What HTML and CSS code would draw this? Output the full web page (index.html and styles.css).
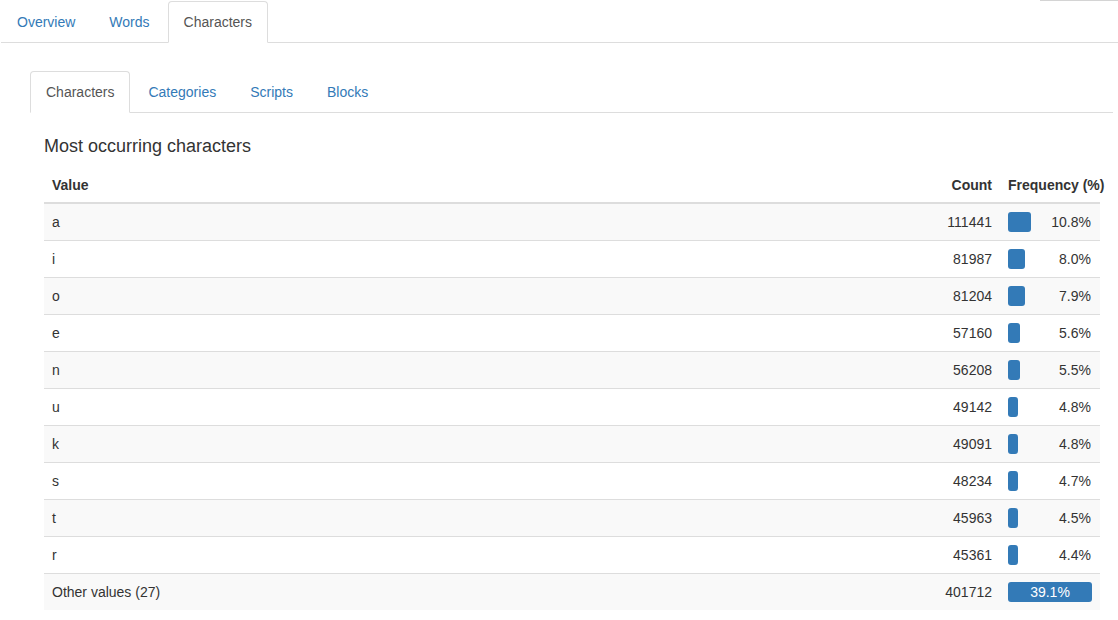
FILE: index.html
```html
<!DOCTYPE html>
<html>
<head>
    <title>Characters</title>
    <link rel="stylesheet" href="styles.css">
</head>
<body>
    <div class="topbar"><span class="topbar-edge"></span></div>
    <ul class="nav-tabs">
        <li><a href="#">Overview</a></li>
        <li><a href="#">Words</a></li>
        <li class="active"><a href="#">Characters</a></li>
    </ul>
    <div class="tab-content">
        <ul class="nav-tabs sub">
            <li class="active"><a href="#">Characters</a></li>
            <li><a href="#">Categories</a></li>
            <li><a href="#">Scripts</a></li>
            <li><a href="#">Blocks</a></li>
        </ul>
        <div class="section">
            <h4>Most occurring characters</h4>
            <table class="freq-table">
                <colgroup>
                    <col>
                    <col class="col-count">
                    <col class="col-freq">
                </colgroup>
                <thead>
                    <tr>
                        <th>Value</th>
                        <th class="num">Count</th>
                        <th>Frequency (%)</th>
                    </tr>
                </thead>
                <tbody>
                    <tr><td>a</td><td class="num">111441</td><td><div class="freq"><div class="bar" style="width:23.2px"></div><span>10.8%</span></div></td></tr>
                    <tr><td>i</td><td class="num">81987</td><td><div class="freq"><div class="bar" style="width:17.2px"></div><span>8.0%</span></div></td></tr>
                    <tr><td>o</td><td class="num">81204</td><td><div class="freq"><div class="bar" style="width:17.0px"></div><span>7.9%</span></div></td></tr>
                    <tr><td>e</td><td class="num">57160</td><td><div class="freq"><div class="bar" style="width:12.0px"></div><span>5.6%</span></div></td></tr>
                    <tr><td>n</td><td class="num">56208</td><td><div class="freq"><div class="bar" style="width:11.8px"></div><span>5.5%</span></div></td></tr>
                    <tr><td>u</td><td class="num">49142</td><td><div class="freq"><div class="bar" style="width:10.3px"></div><span>4.8%</span></div></td></tr>
                    <tr><td>k</td><td class="num">49091</td><td><div class="freq"><div class="bar" style="width:10.3px"></div><span>4.8%</span></div></td></tr>
                    <tr><td>s</td><td class="num">48234</td><td><div class="freq"><div class="bar" style="width:10.1px"></div><span>4.7%</span></div></td></tr>
                    <tr><td>t</td><td class="num">45963</td><td><div class="freq"><div class="bar" style="width:9.7px"></div><span>4.5%</span></div></td></tr>
                    <tr><td>r</td><td class="num">45361</td><td><div class="freq"><div class="bar" style="width:9.5px"></div><span>4.4%</span></div></td></tr>
                    <tr class="other"><td>Other values (27)</td><td class="num">401712</td><td><div class="freq"><div class="bar full">39.1%</div></div></td></tr>
                </tbody>
            </table>
        </div>
    </div>
</body>
</html>
```

FILE: styles.css
```css
* {
    box-sizing: border-box;
}
body {
    margin: 0;
    font-family: "Liberation Sans", Arial, sans-serif;
    font-size: 14px;
    line-height: 20px;
    color: #333;
    background: #fff;
}
a {
    color: #337ab7;
    text-decoration: none;
}

/* thin edge of the panel above */
.topbar {
    height: 1px;
    display: flex;
    justify-content: flex-end;
}
.topbar-edge {
    width: 78px;
    height: 1px;
    background: #d4d4d4;
}

/* tabs */
.nav-tabs {
    list-style: none;
    margin: 0 0 0 1px;
    padding: 0;
    display: flex;
    border-bottom: 1px solid #ddd;
}
.nav-tabs li {
    margin-bottom: -1px;
    margin-right: 2px;
}
.nav-tabs a {
    display: block;
    padding: 10px 15px;
    border: 1px solid transparent;
    border-radius: 4px 4px 0 0;
}
.nav-tabs .active a {
    color: #555;
    background: #fff;
    border-color: #ddd #ddd transparent;
}
.tab-content {
    padding-top: 28px;
}
.nav-tabs.sub {
    margin: 0 5px 0 30px;
}

.section {
    padding: 0 18px 0 44px;
}
h4 {
    font-size: 18px;
    font-weight: 500;
    line-height: 19.8px;
    margin: 24px 0 9px;
}

/* frequency table */
.freq-table {
    width: 100%;
    border-collapse: collapse;
    table-layout: fixed;
}
.col-count {
    width: 90px;
}
.col-freq {
    width: 100px;
}
.freq-table th,
.freq-table td {
    padding: 8px;
    text-align: left;
    white-space: nowrap;
}
.freq-table th {
    padding: 9px 8px 7px;
    font-weight: bold;
    border-bottom: 2px solid #ddd;
}
.freq-table td {
    border-top: 1px solid #ddd;
}
.freq-table tbody tr:first-child td {
    border-top: 0;
}
.freq-table tbody tr:nth-child(odd) {
    background: #f9f9f9;
}
.freq-table .num {
    text-align: right;
}
.freq {
    display: flex;
    align-items: center;
    height: 20px;
}
.freq span {
    margin-left: auto;
    padding-right: 1px;
}
.bar {
    height: 20px;
    background: #337ab7;
    border-radius: 3px;
}
.bar.full {
    width: 100%;
    color: #fff;
    text-align: center;
}
```
